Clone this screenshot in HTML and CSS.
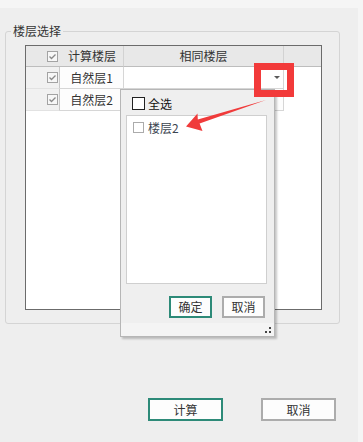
FILE: index.html
```html
<!DOCTYPE html>
<html lang="zh-CN">
<head>
  <meta charset="UTF-8" />
  <meta name="viewport" content="width=device-width, initial-scale=1.0"/>
  <title>楼层选择</title>
  <link rel="stylesheet" href="styles.css">
</head>
<body>
  <div class="page">
    <div class="topbar"></div>

    <fieldset class="group">
      <legend>楼层选择</legend>

      <div class="grid">
        <div class="th th-first">
          <svg class="check" viewBox="0 0 11 11"><rect x="0.5" y="0.5" width="10" height="10" fill="#f7f7f7" stroke="#a3a3a3"/><path d="M2.5 5.5 L4.5 7.5 L8.5 3.5" fill="none" stroke="#8a8a8a" stroke-width="1.3"/></svg>
          <span class="th-text">计算楼层</span>
        </div>
        <div class="th th-center">相同楼层</div>
        <div class="th th-rest"></div>

        <div class="rowhead">
          <svg class="check" viewBox="0 0 11 11"><rect x="0.5" y="0.5" width="10" height="10" fill="#f7f7f7" stroke="#a3a3a3"/><path d="M2.5 5.5 L4.5 7.5 L8.5 3.5" fill="none" stroke="#8a8a8a" stroke-width="1.3"/></svg>
        </div>
        <div class="cell">自然层1</div>
        <div class="cell combo"><span class="combo-arrow"></span></div>
        <div class="blank"></div>

        <div class="rowhead">
          <svg class="check" viewBox="0 0 11 11"><rect x="0.5" y="0.5" width="10" height="10" fill="#f7f7f7" stroke="#a3a3a3"/><path d="M2.5 5.5 L4.5 7.5 L8.5 3.5" fill="none" stroke="#8a8a8a" stroke-width="1.3"/></svg>
        </div>
        <div class="cell">自然层2</div>
        <div class="cell"></div>
        <div class="blank"></div>
      </div>
    </fieldset>

    <div class="actions">
      <button class="btn btn-primary btn-main">计算</button>
      <button class="btn btn-main">取消</button>
    </div>

    <!-- dropdown opened from the combo in row 1 -->
    <div class="popup">
      <div class="popup-all">
        <span class="box-dark"></span>
        <span>全选</span>
      </div>
      <div class="list">
        <div class="list-item">
          <span class="box-light"></span>
          <span class="list-text">楼层2</span>
        </div>
      </div>
      <div class="popup-buttons">
        <button class="btn btn-primary btn-small">确定</button>
        <button class="btn btn-small">取消</button>
      </div>
      <div class="popup-foot">
        <svg class="grip" viewBox="0 0 6 6"><rect x="4" y="0" width="2" height="2" fill="#444"/><rect x="0" y="4" width="2" height="2" fill="#444"/><rect x="4" y="4" width="2" height="2" fill="#444"/></svg>
      </div>
    </div>

    <!-- annotation: red frame + arrow -->
    <svg class="marks" viewBox="0 0 363 442">
      <rect x="257.5" y="66.5" width="33" height="27" fill="none" stroke="#f23a3a" stroke-width="7"/>
      <polygon points="186,126.5 197.5,113.5 197.8,119.6 266,100 199.6,123.4 202.5,131" fill="#f03b3b"/>
    </svg>
  </div>
</body>
</html>
```

FILE: styles.css
```css
:root {
  --bg: #eeeeee;
  --text: #333;
  --teal: #2d8a78;
  --grey-btn: #acacac;
}

html, body {
  margin: 0;
  background: #f5f5f5;
  font-family: "Noto Sans CJK SC", "Noto Sans", sans-serif;
  font-size: 12px;
  color: var(--text);
}

.page {
  position: relative;
  width: 358px;
  height: 442px;
  background: var(--bg);
}

.topbar {
  height: 8px;
  background: #f5f5f5;
}

.group {
  box-sizing: border-box;
  width: 335px;
  margin: 15px 0 0 5px;
  padding: 0;
  border: 1px solid #d4d4d4;
  border-radius: 3px;
  min-inline-size: 0;
}

.group legend {
  margin-left: 5px;
  padding: 0 2px;
  line-height: 16px;
  font-size: 12px;
  color: #333;
}

.grid {
  box-sizing: border-box;
  width: 297px;
  height: 265px;
  margin: 6px 17px 13px 19px;
  border: 1px solid #6b6b6b;
  background: #fff;
  display: grid;
  grid-template-columns: 34px 64px 160px 1fr;
  grid-template-rows: 21px 22px 22px;
}

.th {
  box-sizing: border-box;
  background: #e8e8e8;
  border-bottom: 1px solid #bdbdbd;
  display: flex;
  align-items: center;
  line-height: 14px;
}

.th-first {
  grid-column: span 2;
  padding-left: 21px;
  border-right: 1px solid #d2d2d2;
}

.th-text {
  margin-left: 10px;
}

.th-center {
  justify-content: center;
  border-right: 1px solid #d2d2d2;
}

.check {
  width: 11px;
  height: 11px;
  flex: none;
  display: block;
}

.rowhead {
  box-sizing: border-box;
  background: #f1f1f1;
  border-right: 1px solid #c9c9c9;
  border-bottom: 1px solid #e2e2e2;
  padding-left: 21px;
  display: flex;
  align-items: center;
}

.cell {
  box-sizing: border-box;
  background: #fdfdfd;
  border-right: 1px solid #d6d6d6;
  border-bottom: 1px solid #d6d6d6;
  display: flex;
  align-items: center;
  justify-content: center;
  line-height: 14px;
}

.combo {
  background: #fff;
  justify-content: flex-end;
  padding-right: 3px;
}

.combo-arrow {
  width: 0;
  height: 0;
  border-left: 3px solid transparent;
  border-right: 3px solid transparent;
  border-top: 3px solid #5a5a5a;
}

.blank {
  background: #fff;
}

.actions {
  display: flex;
  gap: 38px;
  margin-top: 74px;
  padding-left: 148px;
}

.btn {
  box-sizing: border-box;
  background: #fdfdfd;
  border: 2px solid var(--grey-btn);
  border-radius: 0;
  padding: 0;
  font-family: inherit;
  font-size: 12px;
  color: var(--text);
  line-height: 14px;
}

.btn-primary {
  border-color: var(--teal);
}

.btn-main {
  width: 75px;
  height: 23px;
}

.btn-small {
  width: 43px;
  height: 22px;
}

.popup {
  position: absolute;
  left: 120px;
  top: 89px;
  width: 155px;
  height: 248px;
  box-sizing: border-box;
  border: 1px solid #b6b6b6;
  background: #efefef;
  box-shadow: 2px 2px 2px rgba(0, 0, 0, 0.22);
  display: flex;
  flex-direction: column;
}

.popup-all {
  display: flex;
  align-items: center;
  gap: 3px;
  height: 13px;
  margin: 7px 0 0 11px;
  font-size: 12px;
  color: #111;
}

.box-dark {
  box-sizing: border-box;
  width: 13px;
  height: 13px;
  border: 1px solid #222;
  background: #fff;
}

.list {
  box-sizing: border-box;
  height: 169px;
  margin: 5px 7px 0 5px;
  border: 1px solid #cfcfcf;
  background: #fff;
}

.list-item {
  display: flex;
  align-items: center;
  padding: 6px 0 0 6px;
  height: 11px;
}

.box-light {
  box-sizing: border-box;
  width: 11px;
  height: 11px;
  border: 1px solid #ababab;
  background: #fff;
}

.list-text {
  margin-left: 4px;
  color: #3b4550;
}

.popup-buttons {
  display: flex;
  justify-content: flex-end;
  gap: 10px;
  margin-top: 12px;
  padding-right: 9px;
}

.popup-foot {
  margin-top: auto;
  height: 13px;
  background: #f4f4f4;
  display: flex;
  justify-content: flex-end;
}

.grip {
  width: 6px;
  height: 6px;
  margin: 4px 3px 0 0;
}

.marks {
  position: absolute;
  left: 0;
  top: 0;
  width: 363px;
  height: 442px;
  pointer-events: none;
}
```
